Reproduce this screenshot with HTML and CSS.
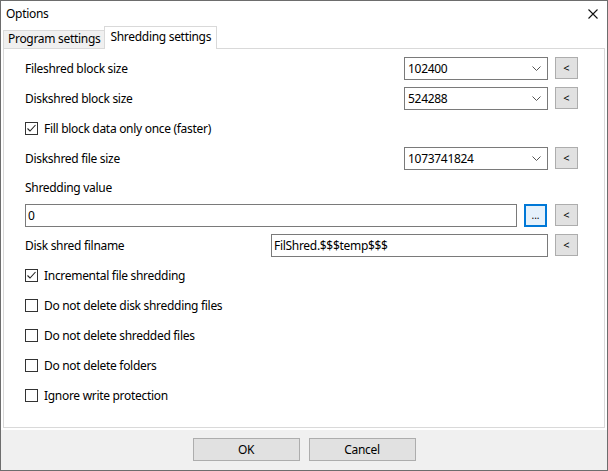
FILE: index.html
```html
<!DOCTYPE html>
<html lang="en">
<head>
    <meta charset="UTF-8">
    <title>Options</title>
    <link rel="stylesheet" href="styles.css">
</head>
<body>
    <div class="window">
        <div class="titlebar">
            <span class="title">Options</span>
            <svg class="close" width="10" height="10" viewBox="0 0 10 10">
                <path d="M0.5 0.5 L9.5 9.5 M9.5 0.5 L0.5 9.5" stroke="#111" stroke-width="1.1" fill="none"/>
            </svg>
        </div>

        <!-- Tabs -->
        <div class="tabs">
            <div class="tab">Program settings</div>
            <div class="tab active">Shredding settings</div>
        </div>

        <div class="panel">
            <div class="row">
                <span class="label">Fileshred block size</span>
                <div class="combo">
                    <span>102400</span>
                    <svg class="chevron" width="9" height="5" viewBox="0 0 9 5"><path d="M0.5 0.5 L4.5 4.5 L8.5 0.5" stroke="#555" fill="none"/></svg>
                </div>
                <button class="btn small">&lt;</button>
            </div>
            <div class="row">
                <span class="label">Diskshred block size</span>
                <div class="combo">
                    <span>524288</span>
                    <svg class="chevron" width="9" height="5" viewBox="0 0 9 5"><path d="M0.5 0.5 L4.5 4.5 L8.5 0.5" stroke="#555" fill="none"/></svg>
                </div>
                <button class="btn small">&lt;</button>
            </div>
            <div class="row">
                <label class="check">
                    <span class="box checked">
                        <svg width="11" height="11" viewBox="0 0 11 11"><path d="M1.5 5.5 L4 8 L9.5 2" stroke="#222" stroke-width="1.1" fill="none"/></svg>
                    </span>
                    Fill block data only once (faster)
                </label>
            </div>
            <div class="row">
                <span class="label">Diskshred file size</span>
                <div class="combo">
                    <span>1073741824</span>
                    <svg class="chevron" width="9" height="5" viewBox="0 0 9 5"><path d="M0.5 0.5 L4.5 4.5 L8.5 0.5" stroke="#555" fill="none"/></svg>
                </div>
                <button class="btn small">&lt;</button>
            </div>
            <div class="row row-label">
                <span class="label">Shredding value</span>
            </div>
            <div class="row row-input">
                <div class="field wide-field">0</div>
                <button class="btn small focused">...</button>
                <button class="btn small">&lt;</button>
            </div>
            <div class="row row-disk">
                <span class="label fixed">Disk shred filname</span>
                <div class="field wide-field">FilShred.$$$temp$$$</div>
                <button class="btn small">&lt;</button>
            </div>
            <div class="row">
                <label class="check">
                    <span class="box checked">
                        <svg width="11" height="11" viewBox="0 0 11 11"><path d="M1.5 5.5 L4 8 L9.5 2" stroke="#222" stroke-width="1.1" fill="none"/></svg>
                    </span>
                    Incremental file shredding
                </label>
            </div>
            <div class="row">
                <label class="check"><span class="box"></span>Do not delete disk shredding files</label>
            </div>
            <div class="row">
                <label class="check"><span class="box"></span>Do not delete shredded files</label>
            </div>
            <div class="row">
                <label class="check"><span class="box"></span>Do not delete folders</label>
            </div>
            <div class="row">
                <label class="check"><span class="box"></span>Ignore write protection</label>
            </div>
        </div>

        <div class="footer">
            <button class="btn dialog">OK</button>
            <button class="btn dialog">Cancel</button>
        </div>
    </div>
</body>
</html>
```

FILE: styles.css
```css
* {
    box-sizing: border-box;
    margin: 0;
    padding: 0;
}

body {
    font-family: "Noto Sans", "Open Sans", Arial, sans-serif;
    font-size: 12px;
    letter-spacing: -0.3px;
    color: #000;
    background: white;
}

.window {
    width: 608px;
    height: 471px;
    border: 1px solid #6d6d6d;
    display: flex;
    flex-direction: column;
    background: white;
}

.titlebar {
    height: 25px;
    display: flex;
    align-items: center;
    justify-content: space-between;
    padding: 0 9px 0 5px;
}

.title {
    font-size: 12px;
}

.tabs {
    height: 22px;
    display: flex;
    align-items: flex-end;
    padding-left: 2px;
    position: relative;
    z-index: 1;
}

.tab {
    height: 18px;
    line-height: 16px;
    padding: 0 4px 0 4px;
    border: 1px solid #d9d9d9;
    border-bottom: none;
    background: #f0f0f0;
}

.tab.active {
    height: 23px;
    margin-bottom: -1px;
    padding: 0 5px 0 5px;
    line-height: 19px;
    background: white;
    margin-left: -1px;
}

.panel {
    height: 380px;
    margin: 0 2px 0 2px;
    border: 1px solid #d9d9d9;
    padding: 4px 26px 0 21px;
}

.row {
    height: 30px;
    display: flex;
    align-items: center;
}

.row-label {
    height: 28px;
}

.row-input {
    height: 26px;
    padding-top: 2px;
}

.row-disk {
    margin-top: 3px;
}

.label {
    flex: 1;
}

.label.fixed {
    flex: none;
    width: 246px;
}

.combo {
    width: 144px;
    height: 23px;
    border: 1px solid #7a7a7a;
    display: flex;
    align-items: center;
    justify-content: space-between;
    padding: 0 6px 0 3px;
    margin-right: 7px;
}

.chevron {
    margin-top: 1px;
}

.field {
    height: 23px;
    border: 1px solid #7a7a7a;
    line-height: 21px;
    padding-left: 2px;
    margin-right: 7px;
}

.wide-field {
    flex: 1;
}

.btn {
    font-family: inherit;
    font-size: 12px;
    letter-spacing: inherit;
    color: #000;
    background: #e1e1e1;
    border: 1px solid #adadad;
}

.btn.small {
    width: 23px;
    height: 22px;
    font-size: 11px;
    line-height: 18px;
    letter-spacing: 0;
}

.btn.focused {
    border: 1px solid #0078d7;
    box-shadow: inset 0 0 0 1px #0078d7;
    background: #e5f1fb;
    height: 23px;
    margin-right: 8px;
    font-size: 10px;
}

.check {
    display: flex;
    align-items: center;
}

.box {
    width: 13px;
    height: 13px;
    border: 1px solid #333;
    background: white;
    margin-right: 6px;
    display: flex;
    align-items: center;
    justify-content: center;
}

.footer {
    margin-top: 2px;
    flex: 1;
    background: #f0f0f0;
    display: flex;
    justify-content: center;
    gap: 9px;
    padding-top: 8px;
}

.btn.dialog {
    width: 107px;
    height: 23px;
}
```
